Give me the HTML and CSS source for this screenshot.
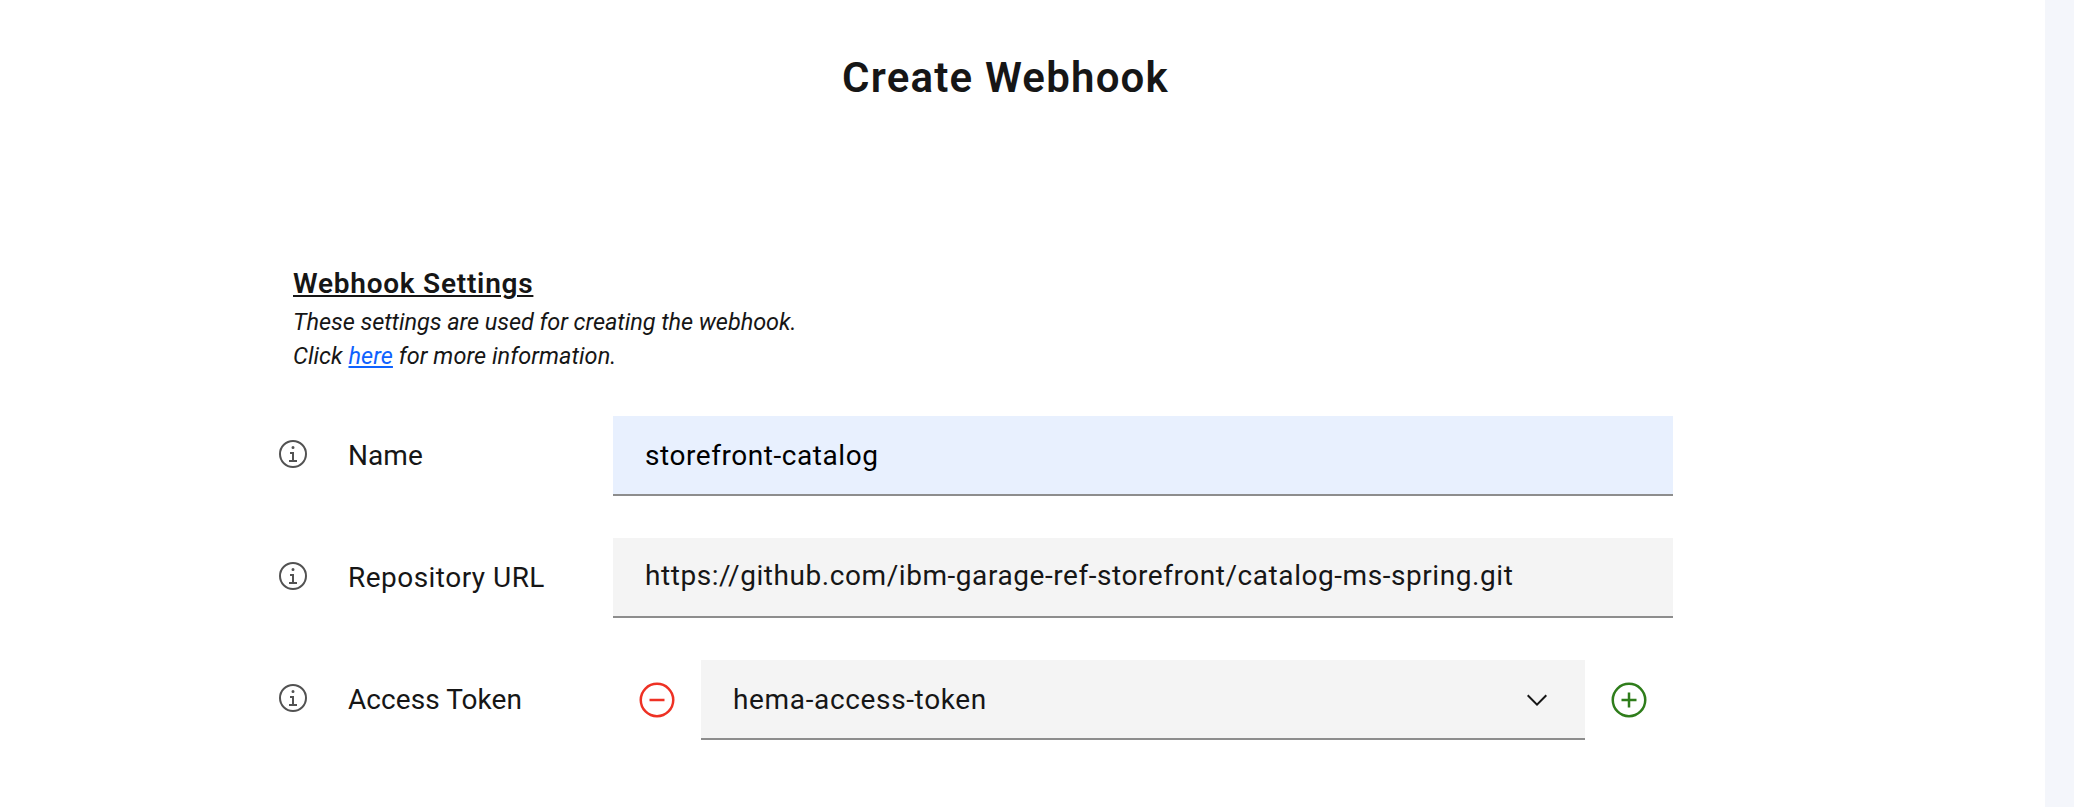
FILE: index.html
```
<!DOCTYPE html>
<html lang="en">
<head>
<meta charset="utf-8">
<title>Create Webhook</title>
<link rel="stylesheet" href="styles.css">
</head>
<body>
<svg class="sprite" aria-hidden="true">
  <symbol id="info" viewBox="0 0 32 32"><path d="M17 22V14h-4v2h2v6h-3v2h8v-2zM16 8a1.500 1.500 0 1 0 1.500 1.500A1.500 1.500 0 0 0 16 8z"/><path d="M16 30A14 14 0 1 1 30 16 14 14 0 0 1 16 30zM16 4A12 12 0 1 0 28 16 12 12 0 0 0 16 4z"/></symbol>
</svg>
<main class="page">
  <h1 class="title">Create Webhook</h1>
  <section class="intro">
    <h2 class="heading">Webhook Settings</h2>
    <p class="note"><span class="purpose">These settings are used for creating the webhook.</span><br>Click <a class="link" href="#">here</a> for more information.</p>
  </section>
  <form class="form">
    <div class="row">
      <svg class="info"><use href="#info"/></svg>
      <label class="label">Name</label>
      <div class="field autofill">storefront-catalog</div>
    </div>
    <div class="row">
      <svg class="info"><use href="#info"/></svg>
      <label class="label repo">Repository URL</label>
      <div class="field url">https://github.com/ibm-garage-ref-storefront/catalog-ms-spring.git</div>
    </div>
    <div class="row">
      <svg class="info"><use href="#info"/></svg>
      <label class="label">Access Token</label>
      <div class="token">
        <svg class="action remove" viewBox="0 0 32 32"><path d="M16 4A12 12 0 1 1 4 16 12 12 0 0 1 16 4m0-2A14 14 0 1 0 30 16 14 14 0 0 0 16 2z"/><path d="M10 15h12v2H10z"/></svg>
        <div class="field select"><span>hema-access-token</span><svg class="chevron" viewBox="0 0 16 16"><path d="M8 11 3 6l.7-.7L8 9.600l4.300-4.300L13 6z"/></svg></div>
        <svg class="action add" viewBox="0 0 32 32"><path d="M16 4A12 12 0 1 1 4 16 12 12 0 0 1 16 4m0-2A14 14 0 1 0 30 16 14 14 0 0 0 16 2z"/><path d="M22 15h-5v-5h-2v5h-5v2h5v5h2v-5h5z"/></svg>
      </div>
    </div>
  </form>
</main>
</body>
</html>
```

FILE: styles.css
```
* { box-sizing: border-box; }
body {
  margin: 0;
  background: #f4f6fb;
  color: #161616;
  font-family: Roboto, "Liberation Sans", sans-serif;
  font-size: 28px;
  font-weight: 400;
}
.sprite { display: none; }
.page {
  width: 2045px;
  height: 100vh;
  padding: 53px 0 0 277px;
  background: #fff;
  overflow: hidden;
}
.title {
  width: 1457px;
  margin: 0;
  text-align: center;
  font-size: 42px;
  font-weight: 600;
  line-height: 50px;
  letter-spacing: 1.2px;
}
.intro { margin: 161px 0 0 16px; }
.heading {
  margin: 0;
  font-size: 28px;
  font-weight: 600;
  line-height: 40px;
  letter-spacing: .76px;
  text-decoration: underline;
  text-decoration-thickness: 2px;
  text-underline-offset: 2px;
}
.note { margin: 1px 0 0; font-size: 23.5px; font-style: italic; line-height: 34px; letter-spacing: .05px; }
.purpose { letter-spacing: -.06px; }
.link { color: #0f62fe; text-decoration-thickness: 2px; text-underline-offset: 2px; }
.form { display: grid; gap: 42px; margin-top: 43px; }
.row { display: flex; height: 80px; }
.info { width: 32px; height: 32px; margin-top: 22px; fill: #525252; }
.label { width: 265px; margin-left: 39px; line-height: 80px; letter-spacing: .06px; }
.repo { letter-spacing: .47px; }
.field {
  width: 1060px;
  height: 80px;
  padding-left: 32px;
  background: #f4f4f4;
  border-bottom: 2px solid #8d8d8d;
  line-height: 80px;
  letter-spacing: .56px;
  white-space: nowrap;
}
.autofill { background: #e8f0fe; color: #000; }
.url { line-height: 76px; }
.token { display: flex; align-items: center; width: 1060px; padding: 0 24px; }
.action { width: 40px; height: 40px; flex: none; }
.remove { fill: #ee3124; }
.add { fill: #2f7d1b; }
.select { display: flex; justify-content: space-between; width: 884px; margin: 0 24px; padding-right: 32px; letter-spacing: .65px; }
.chevron { width: 32px; height: 32px; margin-top: 24px; fill: #161616; }
```
